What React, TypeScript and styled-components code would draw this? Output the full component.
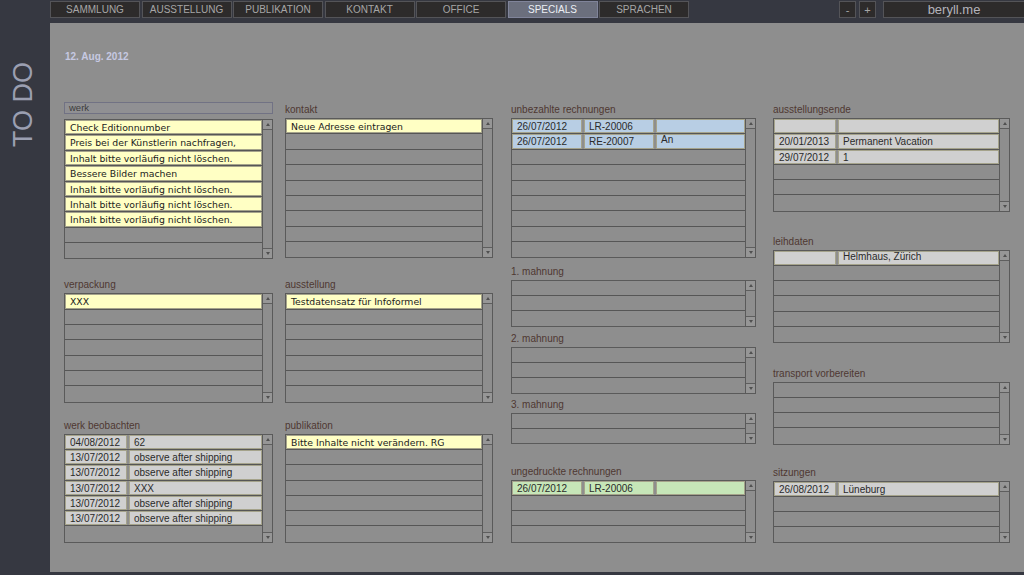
import React from "react";
import styled, { createGlobalStyle } from "styled-components";

type Tone = "yellow" | "gray" | "blue" | "green";

type CellDef = {
  text?: string;
  w?: number;
  tone: Tone;
  note?: boolean;
  top?: boolean;
};

type SectionDef = {
  label?: string;
  input?: string;
  rows: number;
  mt: number;
  data: CellDef[][];
};

type ColumnDef = {
  w: number;
  ml: number;
  sections: SectionDef[];
};

const ROW_PITCH = 15.6;

const toneBg: Record<Tone, string> = {
  yellow: "#ffffc4",
  gray: "#d0d0d0",
  blue: "#b8cee4",
  green: "#c6e6b8",
};

const GlobalStyle = createGlobalStyle`
  html, body {
    margin: 0;
    padding: 0;
    background: #363841;
  }
  body {
    font-family: "Liberation Sans", Arial, sans-serif;
  }
`;

const Page = styled.div`
  width: 1024px;
  height: 575px;
  overflow: hidden;
  display: flex;
  flex-direction: column;
  background: #363841;
`;

const TopBar = styled.div`
  height: 23px;
  box-sizing: border-box;
  display: flex;
  align-items: flex-start;
  padding: 1px 0 0 50px;
`;

const NavButton = styled.div<{ $active?: boolean }>`
  width: 90px;
  height: 17px;
  box-sizing: border-box;
  margin-right: 1.5px;
  background: ${(p) => (p.$active ? "#6b6f7d" : "#2d2b2b")};
  border: 1px solid ${(p) => (p.$active ? "#80849a" : "#545458")};
  color: ${(p) => (p.$active ? "#eceef4" : "#a6a6a6")};
  font-size: 10px;
  display: flex;
  align-items: center;
  justify-content: center;
  text-transform: uppercase;
`;

const RightGroup = styled.div`
  margin-left: auto;
  display: flex;
  align-items: flex-start;
`;

const SmallButton = styled.div<{ $mr: number }>`
  width: 17px;
  height: 17px;
  box-sizing: border-box;
  margin-right: ${(p) => p.$mr}px;
  background: #2d2b2b;
  border: 1px solid #545458;
  color: #a6a6a6;
  font-size: 11px;
  display: flex;
  align-items: center;
  justify-content: center;
`;

const DomainBox = styled.div`
  width: 141px;
  height: 17px;
  box-sizing: border-box;
  background: #2d2b2b;
  border: 1px solid #545458;
  border-right: none;
  color: #b4b4bc;
  font-size: 13px;
  display: flex;
  align-items: center;
  justify-content: center;
`;

const Body = styled.div`
  display: flex;
  height: 549px;
`;

const Sidebar = styled.div`
  width: 50px;
  box-sizing: border-box;
  padding: 39px 4px 0 0;
  display: flex;
  justify-content: center;
  align-items: flex-start;
`;

const SideTitle = styled.div`
  writing-mode: vertical-rl;
  transform: rotate(180deg);
  font-size: 27px;
  line-height: 27px;
  color: #9b9fb1;
  white-space: nowrap;
`;

const Main = styled.div`
  flex: 1;
  background: #8e8e8e;
  box-sizing: border-box;
  padding: 28px 0 0 14px;
`;

const DateLine = styled.div`
  font-size: 10px;
  font-weight: bold;
  line-height: 12px;
  color: #c6c9e2;
  padding-left: 1px;
`;

const Columns = styled.div`
  display: flex;
  align-items: flex-start;
  margin-top: 39px;
`;

const Column = styled.div<{ $w: number; $ml: number }>`
  width: ${(p) => p.$w}px;
  margin-left: ${(p) => p.$ml}px;
  display: flex;
  flex-direction: column;
`;

const Section = styled.div<{ $mt: number }>`
  margin-top: ${(p) => p.$mt}px;
  display: flex;
  flex-direction: column;
`;

const Label = styled.div`
  font-size: 10px;
  line-height: 12px;
  height: 12px;
  margin-bottom: 2px;
  color: #4e3832;
  white-space: nowrap;
`;

const SearchField = styled.div`
  height: 12px;
  box-sizing: border-box;
  border: 1px solid #717284;
  background: #909093;
  color: #3c3c3c;
  font-size: 9.5px;
  line-height: 10px;
  padding-left: 4px;
  margin-bottom: 5px;
`;

const List = styled.div<{ $rows: number }>`
  height: ${(p) => p.$rows * ROW_PITCH}px;
  box-sizing: border-box;
  border: 1px solid #5a5a5a;
  display: flex;
`;

const RowsArea = styled.div<{ $rows: number }>`
  flex: 1;
  min-width: 0;
  display: grid;
  grid-template-rows: repeat(${(p) => p.$rows}, 1fr);
`;

const Row = styled.div`
  display: flex;
  gap: 2px;
  min-height: 0;
  overflow: hidden;
  border-bottom: 1px solid #565656;
  &:last-child {
    border-bottom: none;
  }
`;

const Cell = styled.div<{ $w?: number; $tone: Tone; $note?: boolean; $top?: boolean }>`
  flex: ${(p) => (p.$w ? `0 0 ${p.$w}px` : "1 1 0")};
  min-width: 0;
  box-sizing: border-box;
  background: ${(p) => toneBg[p.$tone]};
  border: 1px solid #a5a38b;
  padding: ${(p) => (p.$top ? "0 4px" : "1px 4px 0")};
  overflow: hidden;
  color: ${(p) => (p.$note ? "#1b1b1b" : "#2a2a2a")};
  font-family: ${(p) =>
    p.$note ? '"DejaVu Sans", "Liberation Sans", sans-serif' : '"Liberation Sans", Arial, sans-serif'};
  font-size: ${(p) => (p.$note ? "9.3px" : "10px")};
  line-height: ${(p) => (p.$top ? "10px" : "12px")};
  white-space: nowrap;
`;

const ScrollBar = styled.div`
  width: 10px;
  flex: 0 0 10px;
  box-sizing: border-box;
  border-left: 1px solid #5a5a5a;
  display: flex;
  flex-direction: column;
  justify-content: space-between;
`;

const ArrowBox = styled.div<{ $down?: boolean }>`
  height: 10px;
  box-sizing: border-box;
  background: #969696;
  border-top: ${(p) => (p.$down ? "1px solid #5e5e5e" : "none")};
  border-bottom: ${(p) => (p.$down ? "none" : "1px solid #5e5e5e")};
  display: flex;
  align-items: center;
  justify-content: center;
`;

const Arrow = styled.div<{ $down?: boolean }>`
  width: 0;
  height: 0;
  border-left: 2.5px solid transparent;
  border-right: 2.5px solid transparent;
  border-bottom: ${(p) => (p.$down ? "none" : "3px solid #505050")};
  border-top: ${(p) => (p.$down ? "3px solid #505050" : "none")};
`;

const note = (text: string): CellDef[] => [{ text, tone: "yellow", note: true }];

const dated = (d: string, t: string, tone: Tone = "gray"): CellDef[] => [
  { text: d, w: 62, tone },
  { text: t, tone },
];

const invoice = (d: string, n: string, t: string, tone: Tone, top?: boolean): CellDef[] => [
  { text: d, w: 70, tone },
  { text: n, w: 70, tone },
  { text: t, tone, top },
];

const columns: ColumnDef[] = [
  {
    w: 209,
    ml: 0,
    sections: [
      {
        input: "werk",
        rows: 9,
        mt: 0,
        data: [
          note("Check Editionnumber"),
          note("Preis bei der Künstlerin nachfragen,"),
          note("Inhalt bitte vorläufig nicht löschen."),
          note("Bessere Bilder machen"),
          note("Inhalt bitte vorläufig nicht löschen."),
          note("Inhalt bitte vorläufig nicht löschen."),
          note("Inhalt bitte vorläufig nicht löschen."),
        ],
      },
      { label: "verpackung", rows: 7, mt: 20, data: [note("XXX")] },
      {
        label: "werk beobachten",
        rows: 7,
        mt: 17,
        data: [
          dated("04/08/2012", "62"),
          dated("13/07/2012", "observe after shipping"),
          dated("13/07/2012", "observe after shipping"),
          dated("13/07/2012", "XXX"),
          dated("13/07/2012", "observe after shipping"),
          dated("13/07/2012", "observe after shipping"),
        ],
      },
    ],
  },
  {
    w: 208,
    ml: 12,
    sections: [
      { label: "kontakt", rows: 9, mt: 2, data: [note("Neue Adresse eintragen")] },
      { label: "ausstellung", rows: 7, mt: 21, data: [note("Testdatensatz für Infoformel")] },
      { label: "publikation", rows: 7, mt: 17, data: [note("Bitte Inhalte nicht verändern. RG")] },
    ],
  },
  {
    w: 245,
    ml: 18,
    sections: [
      {
        label: "unbezahlte rechnungen",
        rows: 9,
        mt: 2,
        data: [
          invoice("26/07/2012", "LR-20006", "", "blue"),
          invoice("26/07/2012", "RE-20007", "An", "blue", true),
        ],
      },
      { label: "1. mahnung", rows: 3, mt: 8, data: [] },
      { label: "2. mahnung", rows: 3, mt: 6, data: [] },
      { label: "3. mahnung", rows: 2, mt: 5, data: [] },
      {
        label: "ungedruckte rechnungen",
        rows: 4,
        mt: 22,
        data: [invoice("26/07/2012", "LR-20006", "", "green")],
      },
    ],
  },
  {
    w: 237,
    ml: 17,
    sections: [
      {
        label: "ausstellungsende",
        rows: 6,
        mt: 2,
        data: [
          dated("", ""),
          dated("20/01/2013", "Permanent Vacation"),
          dated("29/07/2012", "1"),
        ],
      },
      {
        label: "leihdaten",
        rows: 6,
        mt: 24,
        data: [
          [
            { text: "", w: 62, tone: "gray" },
            { text: "Helmhaus, Zürich", tone: "gray", top: true },
          ],
        ],
      },
      { label: "transport vorbereiten", rows: 4, mt: 25, data: [] },
      { label: "sitzungen", rows: 4, mt: 22, data: [dated("26/08/2012", "Lüneburg")] },
    ],
  },
];

const navItems = ["Sammlung", "Ausstellung", "Publikation", "Kontakt", "Office", "Specials", "Sprachen"];

function PortalList({ rows, data }: { rows: number; data: CellDef[][] }) {
  const all = Array.from({ length: rows }, (_, i) => data[i] ?? null);
  return (
    <List $rows={rows}>
      <RowsArea $rows={rows}>
        {all.map((cells, i) => (
          <Row key={i}>
            {cells &&
              cells.map((c, j) => (
                <Cell key={j} $w={c.w} $tone={c.tone} $note={c.note} $top={c.top}>
                  {c.text}
                </Cell>
              ))}
          </Row>
        ))}
      </RowsArea>
      <ScrollBar>
        <ArrowBox>
          <Arrow />
        </ArrowBox>
        <ArrowBox $down>
          <Arrow $down />
        </ArrowBox>
      </ScrollBar>
    </List>
  );
}

export default function App() {
  return (
    <>
      <GlobalStyle />
      <Page>
        <TopBar>
          {navItems.map((n) => (
            <NavButton key={n} $active={n === "Specials"}>
              {n}
            </NavButton>
          ))}
          <RightGroup>
            <SmallButton $mr={3}>-</SmallButton>
            <SmallButton $mr={7}>+</SmallButton>
            <DomainBox>beryll.me</DomainBox>
          </RightGroup>
        </TopBar>
        <Body>
          <Sidebar>
            <SideTitle>TO DO</SideTitle>
          </Sidebar>
          <Main>
            <DateLine>12. Aug. 2012</DateLine>
            <Columns>
              {columns.map((col, ci) => (
                <Column key={ci} $w={col.w} $ml={col.ml}>
                  {col.sections.map((s, si) => (
                    <Section key={si} $mt={s.mt}>
                      {s.input !== undefined ? (
                        <SearchField>{s.input}</SearchField>
                      ) : (
                        <Label>{s.label}</Label>
                      )}
                      <PortalList rows={s.rows} data={s.data} />
                    </Section>
                  ))}
                </Column>
              ))}
            </Columns>
          </Main>
        </Body>
      </Page>
    </>
  );
}
